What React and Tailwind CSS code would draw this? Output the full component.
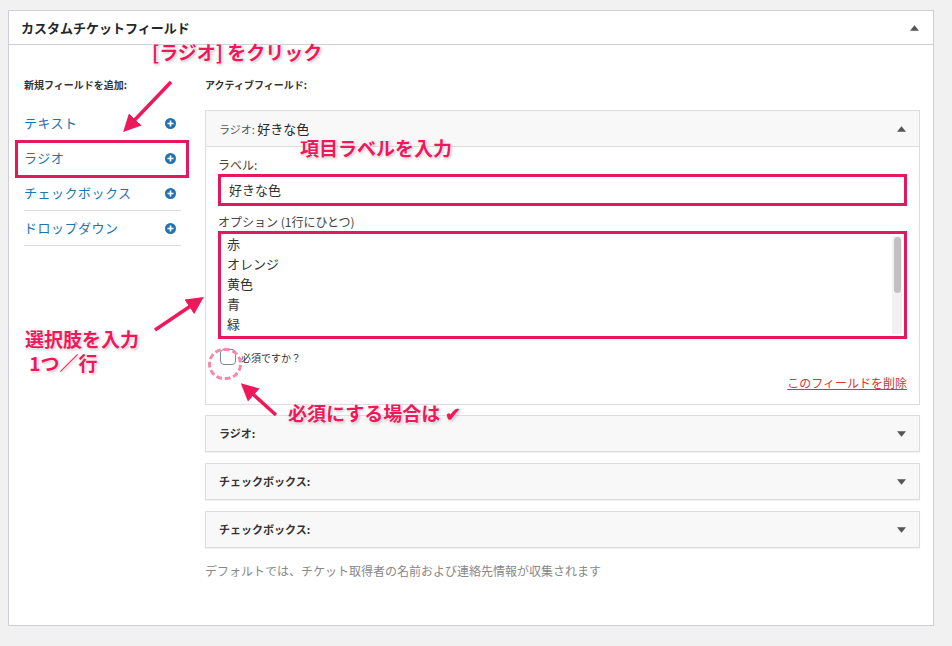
import React from "react";

const font = { fontFamily: '"Noto Sans CJK JP", "Noto Sans", sans-serif' };

function Plus() {
  return (
    <svg width="11" height="11" viewBox="0 0 20 20">
      <circle cx="10" cy="10" r="10" fill="#2271b1" />
      <path d="M10 4.5v11M4.5 10h11" stroke="#fff" strokeWidth="3" />
    </svg>
  );
}

function Tri({ up }) {
  return (
    <svg width="9" height="6" viewBox="0 0 10 6">
      <path d={up ? "M0 6L5 0l5 6z" : "M0 0h10L5 6z"} fill="#555" />
    </svg>
  );
}

function Arrow({ x1, y1, x2, y2 }) {
  return (
    <line x1={x1} y1={y1} x2={x2} y2={y2} stroke="#f0175b" strokeWidth="3.5" markerEnd="url(#ah)" />
  );
}

const Note = ({ className, children }) => (
  <div
    className={"absolute font-bold text-[#f0175b] text-[19px] leading-[24px] " + className}
    style={{ textShadow: "0 0 3px #fff, 0 0 3px #fff, 1px 1px 3px rgba(0,0,0,.4)" }}
  >
    {children}
  </div>
);

function Collapsed({ label }) {
  return (
    <div className="h-[37px] border border-[#ddd] bg-[#f8f8f8] flex items-center justify-between px-[13px] shadow-[0_1px_1px_rgba(0,0,0,.05)]">
      <span className="text-[11px] font-bold text-[#333]">{label}</span>
      <Tri />
    </div>
  );
}

export default function App() {
  const add = ["テキスト", "ラジオ", "チェックボックス", "ドロップダウン"];
  return (
    <div className="relative w-[952px] h-[646px] bg-[#f1f1f1] pt-[10px] pl-[8px]" style={font}>
      <div className="w-[926px] h-[616px] bg-white border border-[#ccd0d4]">
        <div className="h-[34px] border-b border-[#ccd0d4] flex items-center justify-between pl-[12px] pr-[14px]">
          <span className="text-[13px] font-bold text-[#23282d]">カスタムチケットフィールド</span>
          <Tri up />
        </div>
        <div className="flex pl-[15px] pr-[13px] pt-[32px]">
          <div className="w-[157px]">
            <div className="text-[10px] font-bold text-[#333] mb-[14px]">新規フィールドを追加:</div>
            {add.map((a) => (
              <div key={a} className="h-[35px] border-b border-[#ddd] flex items-center justify-between pr-[5px] text-[13px] text-[#2271b1] tracking-[0.5px]">
                {a}
                <Plus />
              </div>
            ))}
          </div>
          <div className="ml-[24px] flex-1">
            <div className="text-[10px] font-bold text-[#333] mb-[18px]">アクティブフィールド:</div>
            <div className="border border-[#ddd]">
              <div className="h-[36px] bg-[#f8f8f8] border-b border-[#ddd] flex items-center justify-between px-[13px]">
                <span className="text-[13px] text-[#23282d]"><span className="text-[11px] text-[#555]">ラジオ: </span>好きな色</span>
                <Tri up />
              </div>
              <div className="px-[12px] pt-[9px] pb-[12px]">
                <div className="text-[12px] text-[#444]">ラベル:</div>
                <div className="mt-[0px] h-[32px] border-[3px] border-[#e5175d] flex items-center px-[8px] text-[13px] text-[#333]">好きな色</div>
                <div className="mt-[7px] text-[12px] text-[#444]">オプション (1行にひとつ)</div>
                <div className="relative mt-[0px] h-[108px] border-[3px] border-[#e5175d] px-[6px] pt-[0px] text-[13px] leading-[20px] text-[#333]">
                  {["赤", "オレンジ", "黄色", "青", "緑"].map((o) => <div key={o}>{o}</div>)}
                  <div className="absolute right-[2px] top-[2px] w-[10px] h-[98px] bg-[#f1f1f1] flex flex-col items-center">
                    <div className="mt-[1px] w-[7px] h-[56px] rounded bg-[#c1c1c1]" />
                  </div>
                </div>
                <div className="mt-[10px] flex items-center gap-[5px]">
                  <div className="w-[16px] h-[16px] rounded-[4px] border border-[#7e8993] ml-[2px]" />
                  <span className="text-[10px] text-[#333]">必須ですか？</span>
                </div>
                <div className="text-right mt-[9px] text-[12px] text-[#d63638] underline">このフィールドを削除</div>
              </div>
            </div>
            <div className="mt-[10px] flex flex-col gap-[11px]">
              <Collapsed label="ラジオ:" />
              <Collapsed label="チェックボックス:" />
              <Collapsed label="チェックボックス:" />
            </div>
            <div className="mt-[14px] text-[12px] text-[#888]">デフォルトでは、チケット取得者の名前および連絡先情報が収集されます</div>
          </div>
        </div>
      </div>

      {/* annotations */}
      <div className="absolute left-[15px] top-[140px] w-[174px] h-[38px] border-[3px] border-[#e5175d]" />
      <div className="absolute left-[208px] top-[348px] w-[34px] h-[32px] rounded-full border-[3px] border-dashed border-[#f58aa8]" />
      <svg className="absolute left-0 top-0" width="952" height="646">
        <defs>
          <marker id="ah" markerWidth="5" markerHeight="5" refX="3" refY="2.5" orient="auto">
            <path d="M0 0L5 2.5 0 5z" fill="#f0175b" />
          </marker>
        </defs>
        <Arrow x1="171" y1="82" x2="128" y2="127" />
        <Arrow x1="155" y1="330" x2="198" y2="301" />
        <Arrow x1="276" y1="415" x2="246" y2="388" />
      </svg>
      <Note className="left-[152px] top-[40px]">[ラジオ] をクリック</Note>
      <Note className="left-[300px] top-[136px]">項目ラベルを入力</Note>
      <Note className="left-[25px] top-[327px]">選択肢を入力<br />&nbsp;1つ／行</Note>
      <Note className="left-[288px] top-[401px]">必須にする場合は ✔</Note>
    </div>
  );
}
